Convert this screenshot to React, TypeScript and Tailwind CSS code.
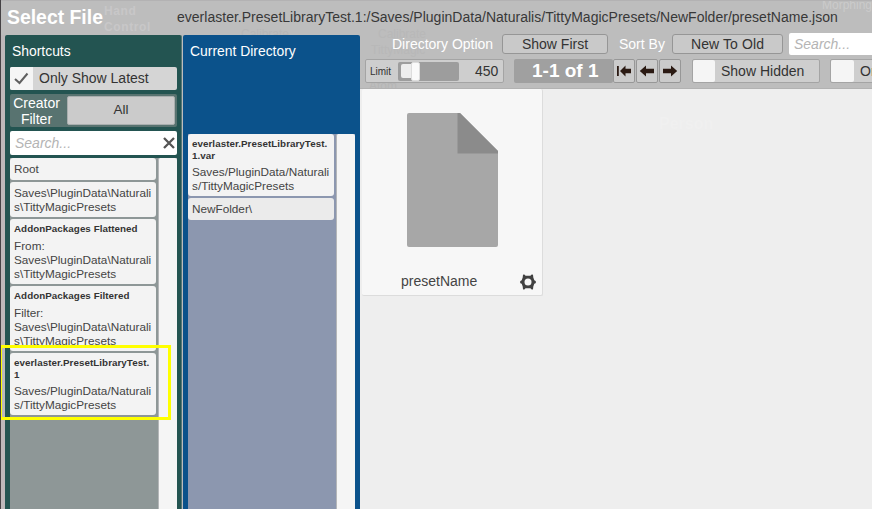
import type { ReactNode } from "react";

function Line({ children, className = "" }: { children: ReactNode; className?: string }) {
  return <div className={`shrink-0 whitespace-pre ${className}`}>{children}</div>;
}

function Entry({ title = [], body, className }: { title?: string[]; body: string[]; className: string }) {
  return (
    <div className={`shrink-0 overflow-hidden rounded-[3px] pl-1 ${className}`}>
      {title.length > 0 && (
        <div className="mb-[4px] pt-[4px] text-[9.8px] font-bold leading-[11.5px] tracking-[0.05px] text-[#333]">
          {title.map((t) => <Line key={t}>{t}</Line>)}
        </div>
      )}
      <div className="text-[11.75px] leading-[14px] text-[#444]">
        {body.map((t) => <Line key={t}>{t}</Line>)}
      </div>
    </div>
  );
}

function ScrollBar() {
  return <div className="w-[19px] shrink-0 rounded-t-[2px] border-l border-[#b4b6b8] bg-[#f5f5f5]" />;
}

function Arrow({ kind }: { kind: "first" | "prev" | "next" }) {
  return (
    <div className="flex h-6 w-[22px] items-center justify-center rounded-[2px] border border-[#979797] bg-[#cbcbcb]">
      <svg width="16" height="12" viewBox="0 0 16 12" fill="#2b1a13">
        {kind === "first" && <path d="M1 1h1.800v10H1zM4 6 9.500 .5v3.300H15v4.400H9.500v3.300z" />}
        {kind === "prev" && <path d="M.8 6 7 .5v3.300h8v4.400H7v3.300z" />}
        {kind === "next" && <path d="M15.200 6 9 .5v3.300H1v4.400h8v3.300z" />}
      </svg>
    </div>
  );
}

function Ghost({ className, children }: { className: string; children: string }) {
  return <span className={`pointer-events-none absolute whitespace-pre ${className}`}>{children}</span>;
}

export default function App() {
  return (
    <div className="relative flex h-[509px] w-[872px] flex-col overflow-hidden border-l border-[#454245] bg-[#bdbdbd] font-['Liberation_Sans',Arial,sans-serif] text-[#333]">
      <Ghost className="left-[103px] top-[3px] text-[12px] font-bold leading-4 tracking-[0.6px] text-[#c8c7c8]">{"Hand\nControl"}</Ghost>
      <Ghost className="left-[240px] top-[26px] h-[9px] overflow-hidden text-[12px] leading-4 text-[#b7b7b7]">Calibrate</Ghost>
      <Ghost className="left-[377px] top-[26px] text-[12px] leading-4 text-[#b8b8b8]">Calibrate</Ghost>
      <Ghost className="left-[370px] top-[42px] text-[12px] leading-4 text-[#b8b8b8]">TittyMagic</Ghost>
      <Ghost className="left-[368px] top-[78px] text-[12px] leading-4 text-[#b5b5b5]">Atom</Ghost>
      <Ghost className="left-[821px] top-[-3px] text-[12px] leading-4 text-[#cbcbcb]">Morphing</Ghost>
      <div className="relative flex h-[35px] shrink-0 items-start border-t border-[#b3b2b3]">
        <Line className="ml-[6px] w-[170px] pt-[4px] text-[19.4px] font-bold leading-6 text-white">Select File</Line>
        <Line className="pt-[5px] text-[14px] leading-[22px] tracking-[0.015px] text-[#383838]">everlaster.PresetLibraryTest.1:/Saves/PluginData/Naturalis/TittyMagicPresets/NewFolder/presetName.json</Line>
      </div>
      <div className="flex min-h-0 flex-1">
        <div className="w-1 shrink-0 bg-[#bdb8ba]" />
        <section className="flex w-[177px] shrink-0 flex-col rounded-t-[2px] border-r border-[#577] bg-[#235451] pl-[5px] pr-1">
          <Line className="h-8 pl-[2px] pt-2 text-[13.9px] leading-[17px] text-white">Shortcuts</Line>
          <div className="flex h-[23px] shrink-0 items-center overflow-hidden rounded-[2px] bg-[#d5d5d5]">
            <div className="flex h-full w-[23px] items-center justify-center bg-[#f5f5f5]">
              <svg width="15" height="13" viewBox="0 0 15 13" fill="none" stroke="#606060" strokeWidth="2"><path d="M1 7 5.500 11 13.500 1.500" /></svg>
            </div>
            <Line className="ml-[6px] text-[14px]">Only Show Latest</Line>
          </div>
          <div className="mt-1 flex h-[33px] shrink-0 items-center rounded-[2px] bg-[#587370]">
            <div className="w-[57px] pr-[4px] text-center text-[14px] leading-4 text-white"><Line>Creator</Line><Line>Filter</Line></div>
            <div className="flex h-[29px] w-[108px] items-center justify-center rounded-[2px] border border-[#a9aeae] bg-[#cbcbcb] text-[13.500px]">All</div>
          </div>
          <div className="mt-1 flex h-6 shrink-0 items-center justify-between rounded-[2px] bg-white pl-[5px] pr-[2px]">
            <Line className="text-[14px] italic text-[#b4b4b4]">Search...</Line>
            <svg width="12" height="12" viewBox="0 0 12 12" stroke="#555" strokeWidth="2.3"><path d="m1 1 10 10M11 1 1 11" /></svg>
          </div>
          <div className="mt-[3px] flex min-h-0 flex-1 justify-between bg-[#8e9797]">
            <div className="flex w-[146px] flex-col gap-[2px]">
              <Entry className="h-[22px] bg-[#f3f3f3] pt-[4px]" body={["Root"]} />
              <Entry className="h-[35px] bg-[#f3f3f3] pt-[4px]" body={["Saves\\PluginData\\Naturali", "s\\TittyMagicPresets"]} />
              <Entry className="h-[65px] bg-[#f3f3f3]" title={["AddonPackages Flattened"]} body={["From:", "Saves\\PluginData\\Naturali", "s\\TittyMagicPresets"]} />
              <Entry className="h-[65px] bg-[#f3f3f3]" title={["AddonPackages Filtered"]} body={["Filter:", "Saves\\PluginData\\Naturali", "s\\TittyMagicPresets"]} />
              <Entry className="h-[62px] bg-[#f3f3f3]" title={["everlaster.PresetLibraryTest.", "1"]} body={["Saves/PluginData/Naturali", "s/TittyMagicPresets"]} />
            </div>
            <ScrollBar />
          </div>
        </section>
        <section className="ml-[1px] flex w-[177px] shrink-0 flex-col rounded-t-[2px] bg-[#0b528b] pl-[5px] pr-[5px]">
          <Line className="h-[99px] pl-[2px] pt-2 text-[13.9px] leading-[17px] text-white">Current Directory</Line>
          <div className="flex min-h-0 flex-1 justify-between bg-[#8c97af]">
            <div className="flex w-[146px] flex-col gap-[2px]">
              <Entry className="h-[62px] bg-[#f3f3f3]" title={["everlaster.PresetLibraryTest.", "1.var"]} body={["Saves/PluginData/Naturali", "s/TittyMagicPresets"]} />
              <Entry className="h-[22px] bg-[#ebebeb] pt-[4px]" body={["NewFolder\\"]} />
            </div>
            <ScrollBar />
          </div>
        </section>
        <main className="relative flex min-w-0 flex-1 flex-col">
          <div className="-mt-[2px] flex h-[22px] shrink-0 items-center overflow-hidden text-[14px]">
            <Line className="ml-[32px] w-[110px] text-white">Directory Option</Line>
            <div className="flex h-5 w-[106px] shrink-0 items-center justify-center rounded-[3px] border border-[#969696] bg-[#c9c9c9]">Show First</div>
            <Line className="ml-[11px] w-[53px] text-white">Sort By</Line>
            <div className="flex h-5 w-[111px] shrink-0 items-center justify-center rounded-[3px] border border-[#969696] bg-[#c9c9c9] tracking-[0.1px]">New To Old</div>
            <div className="ml-[6px] flex h-full w-24 shrink-0 items-center rounded-[2px] bg-white pl-[5px] italic text-[#b4b4b4]">Search...</div>
          </div>
          <div className="mt-1 flex h-6 shrink-0 overflow-hidden pl-[5px]">
            <div className="flex w-[139px] shrink-0 items-center rounded-[2px] border border-[#a4a4a4] bg-[#cecece] pl-1">
              <Line className="w-[28px] text-[10px]">Limit</Line>
              <div className="flex h-[19px] w-[61px] items-center rounded-[2px] bg-[#9d9d9d] pl-[3px]">
                <div className="h-[14px] w-[10px] rounded-l-[2px] bg-[#ededed]" />
                <div className="h-[19px] w-[9px] rounded-[2px] border border-[#ddd] bg-[#fafafa]" />
              </div>
              <Line className="ml-[16px] text-[14px]">450</Line>
            </div>
            <div className="ml-[10px] flex w-[99px] shrink-0 items-center rounded-[2px] bg-[#a0a0a0] pl-[18px] text-[19px] font-bold text-white"><Line>1-1 of 1</Line></div>
            <div className="flex shrink-0 gap-[1px]"><Arrow kind="first" /><Arrow kind="prev" /><Arrow kind="next" /></div>
            <div className="ml-[11px] flex w-[128px] shrink-0 items-center rounded-[2px] border border-[#a4a4a4] bg-[#cecece]">
              <div className="h-full w-[22px] rounded-[2px] bg-[#f5f5f5]" />
              <Line className="ml-[6px] text-[14px]">Show Hidden</Line>
            </div>
            <div className="ml-[10px] flex w-[128px] shrink-0 items-center rounded-[2px] border border-[#a4a4a4] bg-[#cecece]">
              <div className="h-full w-[23px] rounded-[2px] bg-[#f5f5f5]" />
              <Line className="ml-[6px] text-[14px]">On</Line>
            </div>
          </div>
          <div className="relative mt-[5px] flex-1 border-t border-[#b2b2b2] bg-[#eeeeee] pl-[2px]">
            <Ghost className="left-[299px] top-[23px] text-[16px] font-bold text-[#f0f0f0]">Person</Ghost>
            <div className="flex h-[207px] w-[181px] flex-col rounded-[2px] border-b border-r border-[#dcdcdc] bg-[#f7f7f7]">
              <svg className="ml-[44px] mt-[23px] shrink-0" width="93" height="136" viewBox="0 0 93 136">
                <path d="M3 1h51l38 38v94q0 2-2 2H3q-2 0-2-2V3q0-2 2-2Z" fill="#a7a7a7" />
                <path d="M51.500 1H54l38 38v2.500H51.500Z" fill="#8b8b8b" />
              </svg>
              <div className="mt-[23px] flex items-center">
                <Line className="ml-[39px] w-[119px] text-[14px] text-[#444]">presetName</Line>
                <svg width="16" height="16" viewBox="0 0 16 16" fill="#414141">
                  <path d="M3 .8Q4.500 0 5.500 1.800h5Q11.500 0 13 .8l.3 2.700 1 2.700Q16 6.600 16 8t-1.700 1.800l-1 2.700-.3 2.700Q11.500 16 10.500 14.200h-5Q4.500 16 3 15.200l-.3-2.700-1-2.700Q0 9.400 0 8t1.700-1.800l1-2.700Z" />
                  <circle cx="8" cy="8" r="3.500" fill="#f7f7f7" />
                </svg>
              </div>
            </div>
          </div>
        </main>
      </div>
      <div className="pointer-events-none absolute left-[-2px] top-[345px] h-[75px] w-[172px] border-[3px] border-[#ffff00]" />
    </div>
  );
}
